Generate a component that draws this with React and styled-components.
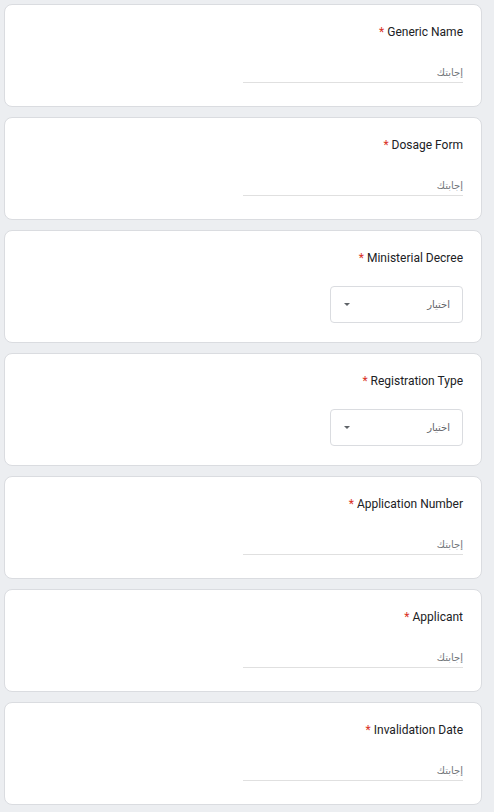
import React from 'react';
import styled, { createGlobalStyle } from 'styled-components';

const GlobalStyle = createGlobalStyle`
  html, body {
    margin: 0;
    padding: 0;
    background: #eceef1;
  }
  body {
    font-family: Roboto, "Liberation Sans", "DejaVu Sans", sans-serif;
  }
`;

const questions = [
  { label: 'Generic Name', type: 'text' },
  { label: 'Dosage Form', type: 'text' },
  { label: 'Ministerial Decree', type: 'select' },
  { label: 'Registration Type', type: 'select' },
  { label: 'Application Number', type: 'text' },
  { label: 'Applicant', type: 'text' },
  { label: 'Invalidation Date', type: 'text' },
];

const App = () => {
  return (
    <>
      <GlobalStyle />
      <Page dir="rtl">
        {questions.map((q, idx) => (
          <Card key={idx} $select={q.type === 'select'}>
            <Label dir="ltr" $select={q.type === 'select'}>
              <Star>*</Star> {q.label}
            </Label>
            {q.type === 'select' ? (
              <Select>
                <SelectText>اختيار</SelectText>
                <Arrow />
              </Select>
            ) : (
              <Input placeholder="إجابتك" />
            )}
          </Card>
        ))}
      </Page>
    </>
  );
};

export default App;

const Page = styled.div`
  display: flex;
  flex-direction: column;
  gap: 10px;
  padding: 4px 12px 4px 4px;
`;

const Card = styled.div`
  display: flex;
  flex-direction: column;
  align-items: flex-start;
  background: #fff;
  border: 1px solid #dadce0;
  border-radius: 8px;
  padding: ${p => (p.$select ? '18px 18px 19px' : '18px 18px 23px')};
`;

const Label = styled.div`
  font-size: 12px;
  line-height: 18px;
  color: #202124;
  margin-bottom: ${p => (p.$select ? '19px' : '20px')};
`;

const Star = styled.span`
  color: #d93025;
`;

const Input = styled.input`
  width: 220px;
  height: 20px;
  margin-top: 1px;
  padding: 0;
  border: none;
  border-bottom: 1px solid #e0e0e0;
  outline: none;
  font-family: "DejaVu Sans", Roboto, sans-serif;
  font-size: 10px;
  color: #202124;
  direction: rtl;
  &::placeholder {
    color: #70757a;
  }
`;

const Select = styled.div`
  width: 133px;
  height: 37px;
  box-sizing: border-box;
  border: 1px solid #dadce0;
  border-radius: 4px;
  display: flex;
  align-items: center;
  justify-content: space-between;
  padding: 0 12px 0 13px;
`;

const SelectText = styled.span`
  font-family: "DejaVu Sans", Roboto, sans-serif;
  font-size: 10px;
  color: #5f6368;
`;

const Arrow = styled.span`
  width: 0;
  height: 0;
  border-left: 3px solid transparent;
  border-right: 3px solid transparent;
  border-top: 3px solid #5f6368;
`;
